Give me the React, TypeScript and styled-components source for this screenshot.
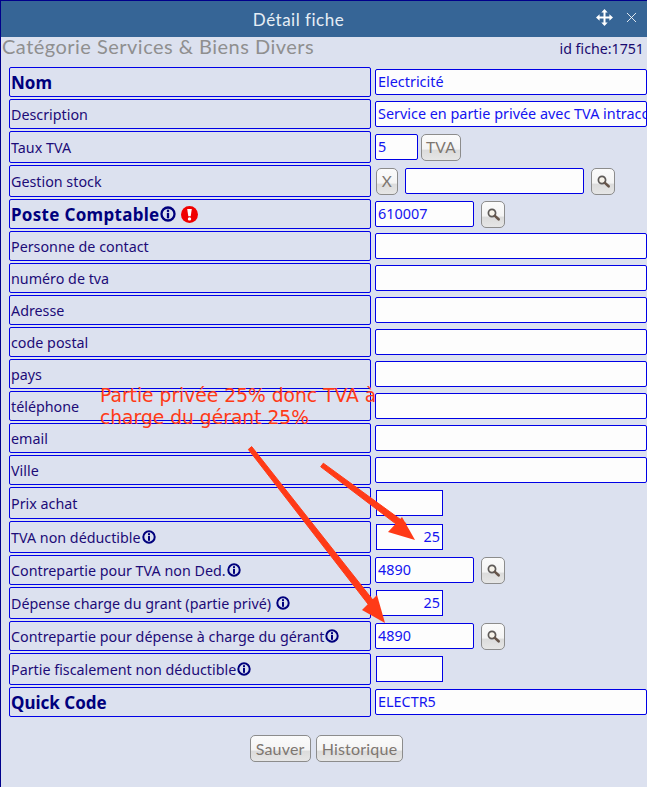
import styled, { createGlobalStyle } from 'styled-components';
import { X } from 'lucide-react';

const GlobalStyle = createGlobalStyle`
  html, body {
    margin: 0;
    padding: 0;
    background: #dce1ef;
    overflow: hidden;
  }
`;

const titleFont = `"Lato", "DejaVu Sans", sans-serif`;
const bodyFont = `"Noto Sans", "Open Sans", sans-serif`;

const Panel = styled.div`
  position: relative;
  width: 647px;
  height: 787px;
  box-sizing: border-box;
  border-left: 1px solid #00008b;
  border-top: 1px solid #00008b;
  background: #dce1ef;
  overflow: hidden;
  font-family: ${bodyFont};
`;

const Header = styled.div`
  display: flex;
  align-items: center;
  height: 36px;
  background: #366596;
  color: #eef3f8;
`;

const HeaderTitle = styled.div`
  flex: 1;
  text-align: center;
  font-family: ${titleFont};
  font-size: 17px;
  letter-spacing: 0.5px;
  color: #e6eef5;
`;

const HeaderIcons = styled.div`
  display: flex;
  align-items: center;
  gap: 10px;
  width: 51px;
  height: 30px;
  margin-bottom: 7px;
  box-sizing: border-box;
  padding-top: 4px;
  color: #fff;
`;

const TopLine = styled.div`
  display: flex;
  justify-content: space-between;
  align-items: center;
  height: 18px;
  padding: 0 3px 0 1px;
  margin-bottom: 12px;
`;

const Category = styled.div`
  font-family: ${titleFont};
  font-size: 20px;
  letter-spacing: 0.48px;
  color: #8f8f8f;
`;

const SheetId = styled.div`
  font-size: 14.2px;
  color: #1a0a70;
  padding-top: 4px;
`;

const Rows = styled.div`
  display: flex;
  flex-direction: column;
  gap: 2px;
  padding-left: 8px;
`;

const Row = styled.div<{ $tall?: boolean }>`
  display: flex;
  height: ${({ $tall }) => ($tall ? 32 : 30)}px;
`;

const Label = styled.div<{ $strong?: boolean; $spaced?: boolean }>`
  display: flex;
  align-items: center;
  box-sizing: border-box;
  width: 362px;
  flex: none;
  padding-left: 1px;
  border: 1px solid #0000e6;
  border-radius: 2px;
  font-size: ${({ $strong }) => ($strong ? 17 : 14.3)}px;
  font-weight: ${({ $strong }) => ($strong ? 700 : 400)};
  letter-spacing: ${({ $spaced }) => ($spaced ? 0.3 : 0)}px;
  color: ${({ $strong }) => ($strong ? '#00007d' : '#1c0c78')};
  white-space: nowrap;
`;

const Fields = styled.div`
  display: flex;
  align-items: center;
  flex: 1;
  min-width: 0;
  padding-left: 4px;
`;

const Field = styled.input<{ $width?: number; $square?: boolean; $right?: boolean; $gap?: number }>`
  box-sizing: border-box;
  flex: none;
  width: ${({ $width }) => ($width ? `${$width}px` : '100%')};
  height: 26px;
  margin-left: ${({ $square, $gap }) => ($square ? 1 : $gap ?? 0)}px;
  padding: 0 ${({ $right }) => ($right ? 2 : 0)}px 2px 2px;
  border: 1px solid #0000e6;
  border-radius: ${({ $square }) => ($square ? 0 : 2)}px;
  background: #fdfdfd;
  font-family: ${bodyFont};
  font-size: 14.4px;
  color: #1414f0;
  text-align: ${({ $right }) => ($right ? 'right' : 'left')};
  outline: none;
`;

const SoftButton = styled.button<{ $gap?: number }>`
  display: inline-flex;
  align-items: center;
  justify-content: center;
  box-sizing: border-box;
  flex: none;
  margin-left: ${({ $gap }) => $gap ?? 0}px;
  padding: 0 4px;
  height: 27px;
  border: 1px solid #8c8c8c;
  border-radius: 5px;
  background: linear-gradient(#fbfbfb 0%, #f4f4f4 55%, #dcdcdc 62%, #e6e6e6 100%);
  font-family: ${titleFont};
  font-size: 15.5px;
  letter-spacing: 0.2px;
  color: #7d7670;
`;

const SearchButton = styled(SoftButton)`
  width: 24px;
  padding: 0;
`;

const ClearButton = styled(SoftButton)`
  width: 22px;
  padding: 0;
  margin-left: 1px;
`;

const InfoMark = styled.svg<{ $large?: boolean }>`
  flex: none;
  width: ${({ $large }) => ($large ? 16 : 14)}px;
  height: ${({ $large }) => ($large ? 16 : 14)}px;
  margin-left: ${({ $large }) => ($large ? 0 : 1)}px;
`;

const AlertMark = styled.svg`
  flex: none;
  width: 17px;
  height: 17px;
  margin-left: 5px;
`;

const Actions = styled.div`
  display: flex;
  justify-content: center;
  gap: 5px;
  margin-top: 18px;
  padding-left: 5px;
`;

const ActionButton = styled(SoftButton)`
  height: 27px;
  padding: 0 5px;
  font-size: 16px;
  letter-spacing: 0.2px;
`;

const Note = styled.div`
  position: absolute;
  left: 99px;
  top: 384px;
  width: 290px;
  font-family: "DejaVu Sans", sans-serif;
  font-size: 18.7px;
  line-height: 22px;
  color: #ff3a17;
`;

const ArrowLayer = styled.svg`
  position: absolute;
  left: -1px;
  top: -1px;
  pointer-events: none;
`;

const Info = ({ large }: { large?: boolean }) => (
  <InfoMark $large={large} viewBox="0 0 14 14">
    <circle cx="7" cy="7" r="5.7" fill="none" stroke="#00007d" strokeWidth="2" />
    <rect x="6" y="3.2" width="2" height="2" fill="#00007d" />
    <rect x="6" y="6" width="2" height="4.8" fill="#00007d" />
  </InfoMark>
);

const Alert = () => (
  <AlertMark viewBox="0 0 17 17">
    <circle cx="8.5" cy="8.5" r="8.5" fill="#f00000" />
    <path d="M6.2 3h4.6l-1.1 7.2H7.3z" fill="#fff" />
    <circle cx="8.5" cy="12.9" r="1.7" fill="#fff" />
  </AlertMark>
);

const MoveMark = () => (
  <svg width="17" height="17" viewBox="0 0 17 17" fill="#fff">
    <path d="M8.5 0l3.2 3.6H9.5v3.9h3.9V5.3L17 8.5l-3.6 3.2V9.5H9.5v3.9h2.2L8.5 17l-3.2-3.6h2.2V9.5H3.6v2.2L0 8.5l3.6-3.2v2.2h3.9V3.6H5.3z" />
  </svg>
);

const Search = () => (
  <svg width="13" height="13" viewBox="0 0 13 13">
    <circle cx="5" cy="5" r="3.6" fill="#f7f3ea" stroke="#5e5a58" strokeWidth="1.7" />
    <path d="M7.9 7.9l3.7 3.4" stroke="#66554a" strokeWidth="2.6" strokeLinecap="round" />
  </svg>
);

const Field100 = (value: string) => <Field $width={99} readOnly value={value} />;
const Numeric = (value: string) => <Field $width={67} $square $right readOnly value={value} />;

export default function App() {
  return (
    <Panel>
      <GlobalStyle />
      <Header>
        <HeaderTitle>Détail fiche</HeaderTitle>
        <HeaderIcons>
          <MoveMark />
          <X size={17} strokeWidth={1.2} />
        </HeaderIcons>
      </Header>
      <TopLine>
        <Category>Catégorie Services &amp; Biens Divers</Category>
        <SheetId>id fiche:1751</SheetId>
      </TopLine>
      <Rows>
        <Row>
          <Label $strong>Nom</Label>
          <Fields><Field readOnly value="Electricité" /></Fields>
        </Row>
        <Row>
          <Label>Description</Label>
          <Fields><Field readOnly value="Service en partie privée avec TVA intracommunautaire" /></Fields>
        </Row>
        <Row $tall>
          <Label>Taux TVA</Label>
          <Fields>
            <Field $width={43} readOnly value="5" />
            <SoftButton $gap={3}>TVA</SoftButton>
          </Fields>
        </Row>
        <Row $tall>
          <Label>Gestion stock</Label>
          <Fields>
            <ClearButton>X</ClearButton>
            <Field $width={179} $gap={7} readOnly value="" />
            <SearchButton $gap={7}><Search /></SearchButton>
          </Fields>
        </Row>
        <Row>
          <Label $strong $spaced>Poste Comptable<Info large /><Alert /></Label>
          <Fields>
            {Field100('610007')}
            <SearchButton $gap={7}><Search /></SearchButton>
          </Fields>
        </Row>
        {['Personne de contact', 'numéro de tva', 'Adresse', 'code postal', 'pays', 'téléphone', 'email', 'Ville'].map((name) => (
          <Row key={name}>
            <Label>{name}</Label>
            <Fields><Field readOnly value="" /></Fields>
          </Row>
        ))}
        <Row $tall>
          <Label>Prix achat</Label>
          <Fields>{Numeric('')}</Fields>
        </Row>
        <Row $tall>
          <Label>TVA non déductible<Info /></Label>
          <Fields>{Numeric('25')}</Fields>
        </Row>
        <Row>
          <Label>Contrepartie pour TVA non Ded.<Info /></Label>
          <Fields>
            {Field100('4890')}
            <SearchButton $gap={7}><Search /></SearchButton>
          </Fields>
        </Row>
        <Row $tall>
          <Label>Dépense charge du grant (partie privé)&nbsp;<Info /></Label>
          <Fields>{Numeric('25')}</Fields>
        </Row>
        <Row>
          <Label>Contrepartie pour dépense à charge du gérant<Info /></Label>
          <Fields>
            {Field100('4890')}
            <SearchButton $gap={7}><Search /></SearchButton>
          </Fields>
        </Row>
        <Row $tall>
          <Label>Partie fiscalement non déductible<Info /></Label>
          <Fields>{Numeric('')}</Fields>
        </Row>
        <Row>
          <Label $strong>Quick Code</Label>
          <Fields><Field readOnly value="ELECTR5" /></Fields>
        </Row>
      </Rows>
      <Actions>
        <ActionButton>Sauver</ActionButton>
        <ActionButton>Historique</ActionButton>
      </Actions>
      <Note>Partie privée 25% donc TVA à charge du gérant 25%</Note>
      <ArrowLayer width="647" height="787" viewBox="0 0 647 787">
        <path d="M323.3 463.2L405.9 523.4L402.1 528.6L320.7 466.8z" fill="#ff3a17" stroke="#ff3a17" strokeLinejoin="round" />
        <path d="M415 540L402 517L388 532z" fill="#ff3a17" />
        <path d="M251.7 446.6L374.5 602L369.5 606L248.3 449.4z" fill="#ff3a17" stroke="#ff3a17" strokeLinejoin="round" />
        <path d="M385 623L377 595L362 610z" fill="#ff3a17" />
      </ArrowLayer>
    </Panel>
  );
}
